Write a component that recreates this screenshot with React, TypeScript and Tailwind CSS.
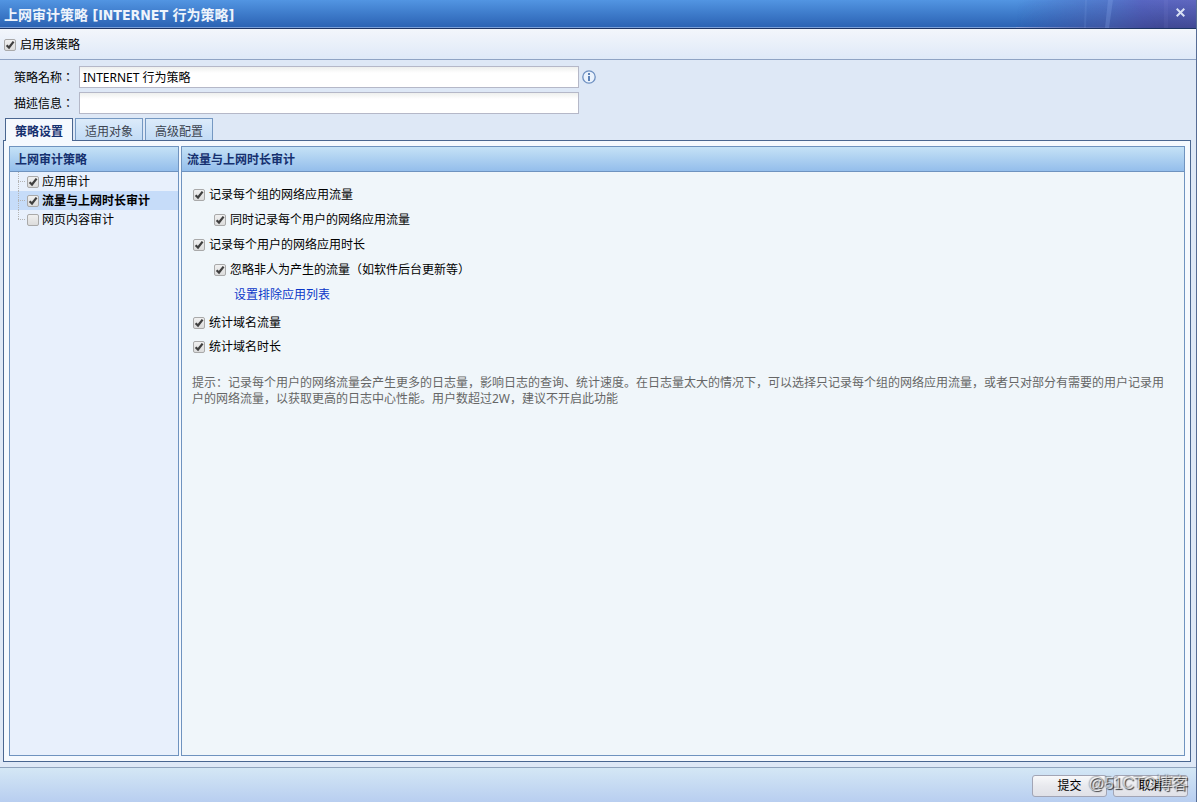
import React, { useState } from 'react'
import clsx from 'clsx'

const TABS = ['策略设置', '适用对象', '高级配置']

const TREE = [
  { id: 'app', label: '应用审计', checked: true },
  { id: 'flow', label: '流量与上网时长审计', checked: true },
  { id: 'web', label: '网页内容审计', checked: false },
]

const HINT =
  '提示：记录每个用户的网络流量会产生更多的日志量，影响日志的查询、统计速度。在日志量太大的情况下，可以选择只记录每个组的网络应用流量，或者只对部分有需要的用户记录用户的网络流量，以获取更高的日志中心性能。用户数超过2W，建议不开启此功能'

function CheckBox({ id, defaultChecked = false }: { id: string; defaultChecked?: boolean }) {
  return (
    <span className="grid h-3 w-3 flex-shrink-0">
      <input
        id={id}
        type="checkbox"
        defaultChecked={defaultChecked}
        className="peer col-start-1 row-start-1 h-3 w-3 appearance-none rounded-[2px] border border-[#a9a9a9] bg-linear-to-b from-[#f0f0f0] to-[#dcdcdc]"
      />
      <svg
        className="pointer-events-none invisible col-start-1 row-start-1 h-3 w-3 peer-checked:visible"
        viewBox="0 0 12 12"
        fill="none"
        stroke="#3f3f3f"
        strokeWidth="2.2"
      >
        <path d="M2.6 6.2 L5 8.5 L9.6 2.6" />
      </svg>
    </span>
  )
}

function Option({ id, label, className }: { id: string; label: string; className?: string }) {
  return (
    <div className={clsx('flex items-center gap-1', className)}>
      <CheckBox id={id} defaultChecked />
      <label htmlFor={id}>{label}</label>
    </div>
  )
}

function PanelTitle({ children }: { children: string }) {
  return (
    <h2 className="h-[25px] border-b border-[#6f93bf] bg-linear-to-b from-[#c5e2f6] to-[#94beeb] px-[5px] text-xs leading-[26px] font-bold text-[#15306f]">
      {children}
    </h2>
  )
}

function TitleBar() {
  return (
    <header className="flex h-[29px] items-stretch border-b border-[#1d3565] bg-linear-to-b from-[#5295e2] to-[#2a61b2]">
      <div className="flex flex-1 items-center border-b border-[#7ba0d8] pt-0.5 pl-1">
        <h1 className="font-['DejaVu_Sans_Condensed','Noto_Sans_CJK_SC',sans-serif] text-sm font-bold text-[#eef4fc]">
          上网审计策略 [INTERNET 行为策略]
        </h1>
      </div>
      <div className="grid w-[180px] border-b border-[#8fa3d6]">
        <svg className="col-start-1 row-start-1 h-7 w-full" viewBox="0 0 180 28" preserveAspectRatio="none" aria-hidden="true">
          <defs>
            <linearGradient id="glow" x1="0" x2="1" y1="0" y2="0">
              <stop offset="0" stopColor="#4a68bd" stopOpacity="0" />
              <stop offset="0.5" stopColor="#5470c4" stopOpacity="0.75" />
              <stop offset="0.7" stopColor="#5866c2" />
              <stop offset="1" stopColor="#6068c0" />
            </linearGradient>
            <linearGradient id="shade" x1="0" x2="0" y1="0" y2="1">
              <stop offset="0" stopColor="#1c2a70" stopOpacity="0" />
              <stop offset="1" stopColor="#242a68" stopOpacity="0.5" />
            </linearGradient>
            <linearGradient id="fade" x1="0" x2="1" y1="0" y2="0">
              <stop offset="0" stopColor="#000" />
              <stop offset="0.8" stopColor="#fff" />
            </linearGradient>
            <mask id="fadeMask">
              <rect width="180" height="28" fill="url(#fade)" />
            </mask>
          </defs>
          <rect width="180" height="28" fill="url(#glow)" />
          <rect width="180" height="28" fill="url(#shade)" mask="url(#fadeMask)" />
          <path d="M92 0 L97 0 L93 28 L89 28 Z" fill="#8fb0ee" opacity="0.25" />
          <path d="M69 0 L71 0 L70 28 L68 28 Z" fill="#8fb0ee" opacity="0.15" />
          <path d="M148 0 H152 V28 H148 Z" fill="#a9a2e8" opacity="0.08" />
        </svg>
        <button type="button" aria-label="关闭" className="col-start-1 row-start-1 mr-2 flex w-4 items-center justify-center justify-self-end pb-1">
          <svg className="h-[9px] w-[9px]" viewBox="0 0 9 9" stroke="#d8e0f4" strokeWidth="2">
            <path d="M0.7 0.7 L8.3 8.3 M8.3 0.7 L0.7 8.3" />
          </svg>
        </button>
      </div>
    </header>
  )
}

function InfoIcon() {
  return (
    <svg className="h-3.5 w-3.5" viewBox="0 0 14 14" aria-hidden="true">
      <circle cx="7" cy="7" r="6.2" fill="#eaf2fc" stroke="#6d8fc0" strokeWidth="1.3" />
      <path d="M6 3h2v2H6z M6 6h2v5H6z" fill="#5c82b8" />
    </svg>
  )
}

export default function App() {
  const [tab, setTab] = useState(0)
  const [node, setNode] = useState('flow')

  // TC glyphs keep the full-width colon centred
  const labelClass = "w-[65px] font-['Noto_Sans_CJK_TC',sans-serif]"
  const inputClass =
    'h-[22px] w-[500px] border border-[#b5b8c8] bg-linear-to-b from-[#eef0ee] via-white via-30% to-white px-[3px] text-xs text-black outline-none'

  return (
    <div className="relative flex min-h-screen flex-col border-r border-[#566c94] bg-[#dee8f6] font-['Noto_Sans','Noto_Sans_CJK_SC',sans-serif] text-xs text-black">
      <TitleBar />

      <div className="flex h-[31px] items-center gap-1 border-b border-[#8fa3c4] bg-linear-to-b from-[#f3f6fb] to-[#dfe9f8] px-1 pt-0.5">
        <CheckBox id="enabled" defaultChecked />
        <label htmlFor="enabled">启用该策略</label>
      </div>

      <form className="flex flex-col gap-1 pt-1.5 pl-3.5">
        <div className="flex items-center">
          <label htmlFor="name" className={labelClass}>策略名称：</label>
          <input id="name" type="text" defaultValue="INTERNET 行为策略" className={inputClass} />
          <span className="ml-[3px]"><InfoIcon /></span>
        </div>
        <div className="flex items-center">
          <label htmlFor="desc" className={labelClass}>描述信息：</label>
          <input id="desc" type="text" className={inputClass} />
        </div>
      </form>

      {/* Tabs overlap the top border of the main box */}
      <div role="tablist" className="z-10 -mb-px flex items-end gap-0.5 pt-1 pl-[5px]">
        {TABS.map((label, i) => (
          <button
            key={label}
            type="button"
            role="tab"
            aria-selected={i === tab}
            onClick={() => setTab(i)}
            className={clsx(
              'w-[68px] border border-b-0 pt-1',
              i === tab
                ? 'h-[23px] border-[#4a6690] bg-[#f5f9fe] font-bold text-[#15306f]'
                : 'mb-px h-[22px] border-[#7598c2] bg-linear-to-b from-[#dcebfa] to-[#c2dbf5] text-[#3c4450]'
            )}
          >
            {label}
          </button>
        ))}
      </div>

      <main className="mr-[5px] mb-[5px] ml-[3px] flex flex-1 gap-0.5 border border-[#4a6690] bg-[#f5f9fe] p-[5px]">
        <aside className="w-[170px] flex-shrink-0 border border-[#6f93bf] bg-[#e8f0fc]">
          <PanelTitle>上网审计策略</PanelTitle>
          <ul>
            {TREE.map((item, i) => (
              <li
                key={item.id}
                onClick={() => setNode(item.id)}
                className={clsx('flex h-[19px] items-center pl-2', item.id === node && 'bg-[#c6dcf9] font-bold')}
              >
                <svg className="h-[19px] w-[9px]" viewBox="0 0 9 19" stroke="#b4b4b4" strokeDasharray="1 1" aria-hidden="true">
                  <path d={i === TREE.length - 1 ? 'M0.5 0V9' : 'M0.5 0V19'} />
                  <path d="M0 9.5H7" />
                </svg>
                <CheckBox id={item.id} defaultChecked={item.checked} />
                <label htmlFor={item.id} className="pl-[3px]">{item.label}</label>
              </li>
            ))}
          </ul>
        </aside>

        <section className="min-w-0 flex-1 border border-[#6f93bf] bg-[#f0f6fa]">
          <PanelTitle>流量与上网时长审计</PanelTitle>
          <div className="px-2.5 pt-2.5">
            <div className="pl-px leading-[25px]">
              <Option id="group-flow" label="记录每个组的网络应用流量" />
              <Option id="user-flow" label="同时记录每个用户的网络应用流量" className="pl-[21px]" />
              <Option id="user-time" label="记录每个用户的网络应用时长" />
              <Option id="ignore" label="忽略非人为产生的流量（如软件后台更新等）" className="pl-[21px]" />
              <a href="#exclude" className="ml-[41px] block w-fit text-[#0a36c8]">设置排除应用列表</a>
            </div>
            <div className="pt-1 pl-px leading-6">
              <Option id="domain-flow" label="统计域名流量" />
              <Option id="domain-time" label="统计域名时长" />
            </div>
            <p className="pt-4 leading-4 text-[#666]">{HINT}</p>
          </div>
        </section>
      </main>

      <footer className="flex h-[35px] justify-end gap-1.5 border-t border-[#8fa3bd] bg-linear-to-b from-[#d4e7f5] to-[#b8cef0] pt-[7px] pr-2">
        {['提交', '取消'].map(label => (
          <button
            key={label}
            type="button"
            className="h-[22px] w-[75px] rounded-[3px] border border-[#a2a5b5] bg-linear-to-b from-[#f8f8fa] via-[#e8e9ee] to-[#e0e1e7]"
          >
            {label}
          </button>
        ))}
      </footer>

      <span className="pointer-events-none absolute right-2 bottom-2 font-['Liberation_Sans','Noto_Sans_CJK_SC',sans-serif] text-base leading-5 text-white/60 [text-shadow:1px_1px_1px_rgba(0,0,0,0.75),-1px_-1px_1px_rgba(60,60,60,0.4)]">
        @51CTO博客
      </span>
    </div>
  )
}
